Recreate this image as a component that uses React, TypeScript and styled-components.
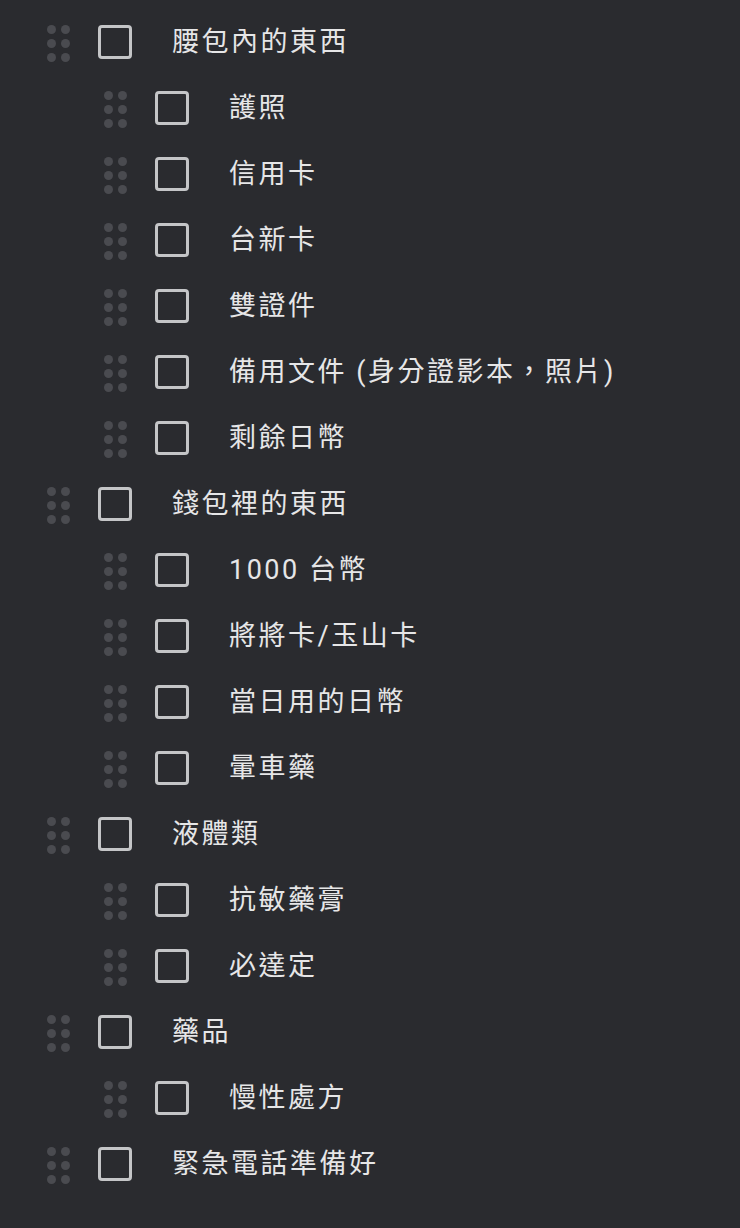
import React from "react";
import styled, { createGlobalStyle } from "styled-components";

const GlobalStyle = createGlobalStyle`
  html, body {
    margin: 0;
    padding: 0;
    background: #2a2b2f;
  }
  body {
    font-family: Roboto, "Noto Sans CJK TC", sans-serif;
  }
`;

type Item = { label: string; level: 0 | 1 };

const items: Item[] = [
  { label: "腰包內的東西", level: 0 },
  { label: "護照", level: 1 },
  { label: "信用卡", level: 1 },
  { label: "台新卡", level: 1 },
  { label: "雙證件", level: 1 },
  { label: "備用文件 (身分證影本，照片)", level: 1 },
  { label: "剩餘日幣", level: 1 },
  { label: "錢包裡的東西", level: 0 },
  { label: "1000 台幣", level: 1 },
  { label: "將將卡/玉山卡", level: 1 },
  { label: "當日用的日幣", level: 1 },
  { label: "暈車藥", level: 1 },
  { label: "液體類", level: 0 },
  { label: "抗敏藥膏", level: 1 },
  { label: "必達定", level: 1 },
  { label: "藥品", level: 0 },
  { label: "慢性處方", level: 1 },
  { label: "緊急電話準備好", level: 0 },
];

const Page = styled.div`
  min-height: 1228px;
  background: #2a2b2f;
  padding-top: 9px;
  box-sizing: border-box;
`;

const List = styled.ul`
  list-style: none;
  margin: 0;
  padding: 0;
`;

const Row = styled.li<{ $level: number }>`
  height: 66px;
  display: flex;
  align-items: center;
  padding-left: ${(p) => 47 + p.$level * 57}px;
`;

const Handle = styled.div`
  display: grid;
  grid-template-columns: repeat(2, 9px);
  grid-auto-rows: 9px;
  column-gap: 5px;
  row-gap: 5px;
  width: 23px;
  margin-top: 2px;
`;

const Dot = styled.span`
  width: 9px;
  height: 9px;
  border-radius: 50%;
  background: #4a4b50;
`;

const Box = styled.span`
  width: 34px;
  height: 34px;
  margin-left: 28px;
  box-sizing: border-box;
  border: 3px solid #c4c5c7;
  border-radius: 4px;
`;

const Label = styled.span`
  margin-left: 40px;
  color: #e6e6e7;
  font-size: 27px;
  letter-spacing: 2.5px;
  line-height: 1;
  white-space: nowrap;
`;

const DragHandle = () => (
  <Handle>
    {Array.from({ length: 6 }).map((_, i) => (
      <Dot key={i} />
    ))}
  </Handle>
);

export default function App() {
  return (
    <Page>
      <GlobalStyle />
      <List>
        {items.map((it, i) => (
          <Row key={i} $level={it.level}>
            <DragHandle />
            <Box />
            <Label>{it.label}</Label>
          </Row>
        ))}
      </List>
    </Page>
  );
}
